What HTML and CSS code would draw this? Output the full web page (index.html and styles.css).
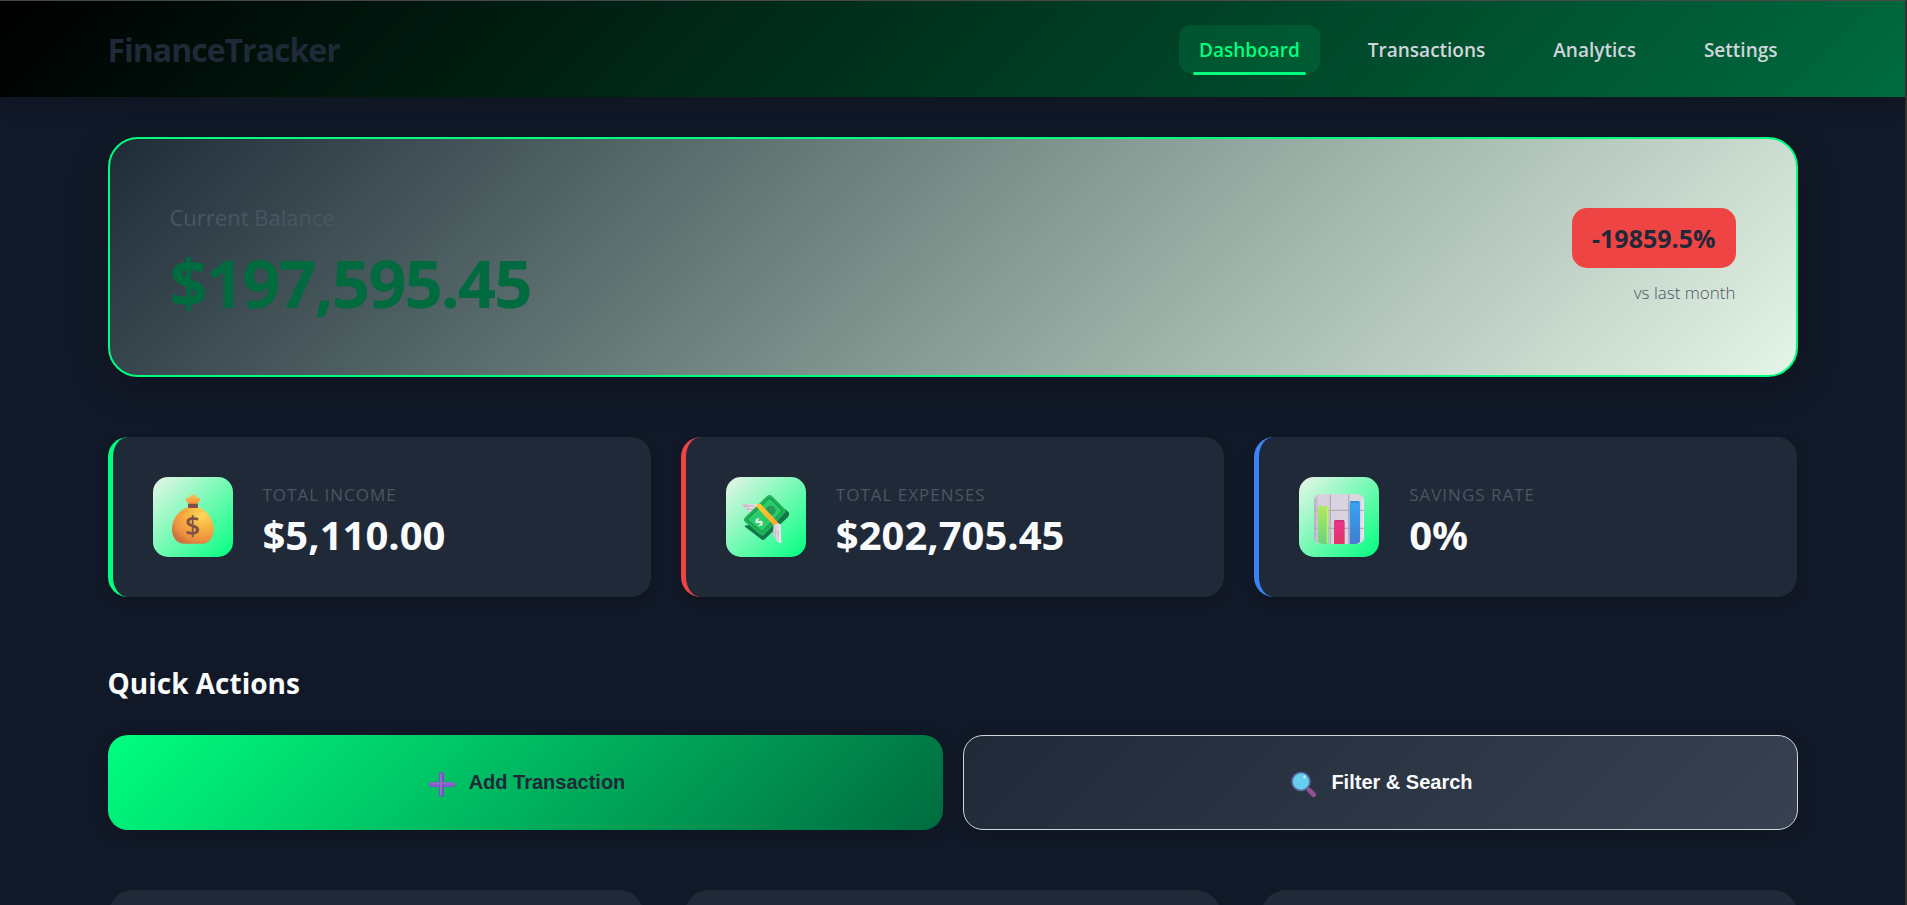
FILE: index.html
```html
<!DOCTYPE html>
<html lang="en">
<head>
<meta charset="utf-8">
<meta name="viewport" content="width=device-width, initial-scale=1">
<title>FinanceTracker</title>
<link rel="stylesheet" href="styles.css">
</head>
<body>
<header class="header">
  <div class="container header-inner">
    <div class="logo">FinanceTracker</div>
    <nav class="nav">
      <a class="nav-link active" href="#dashboard">Dashboard</a>
      <a class="nav-link" href="#transactions">Transactions</a>
      <a class="nav-link" href="#analytics">Analytics</a>
      <a class="nav-link" href="#settings">Settings</a>
    </nav>
  </div>
</header>
<main class="container main">
  <section class="balance">
    <div>
      <div class="balance-label">Current Balance</div>
      <div class="balance-amount">$197,595.45</div>
    </div>
    <div class="change">
      <span class="change-badge">-19859.5%</span>
      <span class="change-note">vs last month</span>
    </div>
  </section>

  <section class="stats">
    <article class="stat income">
      <div class="stat-icon">
        <svg width="50" height="50" viewBox="0 0 150 150" aria-hidden="true">
          <defs>
            <radialGradient id="bag" cx=".72" cy=".22" r=".85"><stop offset="0" stop-color="#ffd95c"/><stop offset=".45" stop-color="#f6b040"/><stop offset=".8" stop-color="#ee9140"/><stop offset="1" stop-color="#d2703f"/></radialGradient>
            <linearGradient id="neck" x1="0" y1="0" x2="0" y2="1"><stop offset="0" stop-color="#fdc04a"/><stop offset="1" stop-color="#f3903f"/></linearGradient>
          </defs>
          <path d="M63 32 L53 16 Q52 10 59 12 Q63 13 65 8 Q68 1 75 3 Q82 1 85 8 Q87 13 91 12 Q98 10 97 16 L87 32Z" fill="url(#neck)"/>
          <path d="M61 40 H89 C112 44 137 72 137 105 C137 132 122 149 101 149 H49 C27 149 12 132 12 105 C12 72 38 44 61 40Z" fill="url(#bag)"/>
          <rect x="60" y="29" width="30" height="13" rx="3" fill="#825045"/>
          <text x="74" y="125" class="bag-sign">$</text>
        </svg>
      </div>
      <div class="stat-text">
        <div class="stat-label">Total Income</div>
        <div class="stat-value">$5,110.00</div>
      </div>
    </article>
    <article class="stat expenses">
      <div class="stat-icon">
        <svg width="50" height="50" viewBox="0 0 150 150" aria-hidden="true">
          <defs>
            <linearGradient id="wing" x1="0" y1="0" x2="1" y2="0"><stop offset="0" stop-color="#c9c3cc"/><stop offset="1" stop-color="#efebf0"/></linearGradient>
            <linearGradient id="band" x1="0" y1="0" x2="1" y2="1"><stop offset="0" stop-color="#ffcf2e"/><stop offset="1" stop-color="#f8a52b"/></linearGradient>
          </defs>
          <path d="M2 30 H50 L46 58 L26 55 Q20 54 22 50 Q13 48 14 43 Q6 41 2 30Z" fill="url(#wing)"/>
          <path d="M9 36 H42 M17 46 H38" stroke="#aaa4ae" stroke-width="2"/>
          <path d="M10 92 L68 136 L142 65 Q146 60 142 54 L132 45 V55 L68 118Z" fill="#12754a"/>
          <path d="M10 97 L61 136 Q67 140 72 135 L141 69 Q146 62 142 54Z" fill="#12754a"/>
          <path d="M79 5 Q86 0 93 6 L132 46 Q137 52 131 58 L70 122 Q64 128 58 122 L12 84 Q6 78 11 71Z" fill="#20b259"/>
          <path d="M82 15 Q86 12 90 16 L121 47 Q124 51 120 55 L67 110 Q63 114 59 110 L22 80 Q18 77 22 73Z" fill="#28cc69" stroke="#168947" stroke-width="3"/>
          <ellipse cx="89" cy="49" rx="15" ry="14" fill="#25995a"/>
          <path d="M44 36 Q50 25 59 30 L116 91 L100 96Z" fill="url(#band)"/>
          <text x="54" y="96" class="note-sign" transform="rotate(-45 54 84)">$</text>
          <path d="M97 94 Q107 85 119 91 L121 148 Q112 148 109 141 Q102 139 103 130 Q93 129 96 116Z" fill="url(#wing)"/>
          <path d="M104 109 V129 M112 109 V139" stroke="#b9b3bd" stroke-width="2"/>
        </svg>
      </div>
      <div class="stat-text">
        <div class="stat-label">Total Expenses</div>
        <div class="stat-value">$202,705.45</div>
      </div>
    </article>
    <article class="stat savings">
      <div class="stat-icon">
        <svg width="50" height="50" viewBox="0 0 150 150" aria-hidden="true">
          <defs>
            <linearGradient id="lime" x1="0" y1="0" x2="0" y2="1"><stop offset="0" stop-color="#b4e960"/><stop offset="1" stop-color="#66d681"/></linearGradient>
            <linearGradient id="pink" x1="0" y1="0" x2="0" y2="1"><stop offset="0" stop-color="#ee338e"/><stop offset="1" stop-color="#dc3765"/></linearGradient>
            <linearGradient id="blue" x1="0" y1="0" x2="0" y2="1"><stop offset="0" stop-color="#35a6f5"/><stop offset="1" stop-color="#447bcf"/></linearGradient>
            <linearGradient id="board" x1="0" y1="0" x2="1" y2="0"><stop offset="0" stop-color="#b7adbf"/><stop offset=".1" stop-color="#d7d0de"/><stop offset=".93" stop-color="#dbd5e2"/><stop offset="1" stop-color="#eee9f2"/></linearGradient>
          </defs>
          <rect width="150" height="150" rx="20" fill="url(#board)"/>
          <path d="M0 49 H150 M0 103 H150 M49 2 V149 M104 2 V149" stroke="#b6adba" stroke-width="4"/>
          <path d="M12 42 Q12 36 18 36 H38 Q44 36 44 42 V150 H24 Q16 149 12 144Z" fill="url(#lime)"/>
          <path d="M60 84 Q60 78 66 78 H86 Q92 78 92 84 V150 H60Z" fill="url(#pink)"/>
          <path d="M107 27 Q107 21 113 21 H132 Q138 21 138 27 V144 Q132 150 124 150 H107Z" fill="url(#blue)"/>
          <path d="M40 41 V148" stroke="#d1f276" stroke-width="3"/>
          <path d="M62 81 H90" stroke="#bb3467" stroke-width="4"/>
          <path d="M109 24 H136" stroke="#2c80cb" stroke-width="4"/>
        </svg>
      </div>
      <div class="stat-text">
        <div class="stat-label">Savings Rate</div>
        <div class="stat-value">0%</div>
      </div>
    </article>
  </section>

  <section class="actions">
    <h2 class="section-title">Quick Actions</h2>
    <div class="action-row">
      <button class="action primary" type="button">
        <svg width="30" height="28" viewBox="-4 -2 30 28" aria-hidden="true">
          <rect x="0" y="11" width="26" height="5" rx="2" fill="#8653d3"/>
          <rect x="10" y="1" width="5" height="25" rx="2" fill="#7652bd"/>
          <path d="M2 12.500 H24 M12 3 V24" stroke="#8d70c4" stroke-width="2" stroke-linecap="round"/>
        </svg>
        Add Transaction
      </button>
      <button class="action secondary" type="button">
        <svg width="30" height="28" viewBox="-4 -2 30 28" aria-hidden="true">
          <path d="M16 17 L18 19" stroke="#7b6b93" stroke-width="3"/>
          <path d="M18.500 19.500 L22.500 23.500" stroke="#8e508f" stroke-width="5" stroke-linecap="round"/>
          <circle cx="10" cy="10.500" r="9" fill="#64d0ee" stroke="#5964a5" stroke-width="1.600"/>
          <ellipse cx="13.500" cy="6" rx="1.200" ry="1.800" fill="#c4effa"/>
        </svg>
        Filter &amp; Search
      </button>
    </div>
  </section>

  <section class="panels">
    <div class="panel"></div>
    <div class="panel"></div>
    <div class="panel"></div>
  </section>
</main>
</body>
</html>
```
FILE: styles.css
```css
* {
  box-sizing: border-box;
}

body {
  display: flex;
  flex-direction: column;
  margin: 0;
  height: 100vh;
  overflow: hidden;
  border-top: 1px solid #484848;
  border-right: 2px solid #303030;
  background: #111827;
  color: #f9fafb;
  font-family: "Segoe UI", "Open Sans", "Noto Sans", sans-serif;
}

.container {
  width: calc(100% - 64px);
  max-width: 1690px;
  margin: 0 auto;
}

.header {
  background: linear-gradient(135deg, #000000 0%, #006b3f 100%);
  box-shadow: 0 4px 20px rgba(0, 0, 0, 0.15);
}

.header-inner {
  display: flex;
  align-items: center;
  justify-content: space-between;
  min-height: 96px;
}

.logo {
  color: #1f2937;
  font-size: 32px;
  font-weight: 700;
  letter-spacing: -1px;
}

.nav {
  display: flex;
  gap: 28px;
}

.nav-link {
  position: relative;
  padding: 13px 20px 11px;
  border-radius: 12px;
  color: #d1d5db;
  font-size: 19px;
  font-weight: 600;
  line-height: 24px;
  text-decoration: none;
}

.nav-link.active {
  background: rgba(0, 255, 127, 0.1);
  color: #00ff7f;
}

.nav-link.active::after {
  content: "";
  position: absolute;
  bottom: -2px;
  left: 10%;
  width: 80%;
  height: 3px;
  border-radius: 2px;
  background: #00ff7f;
}

.main {
  display: flex;
  flex: 1;
  flex-direction: column;
  min-height: 0;
  padding-top: 40px;
}

.balance {
  display: flex;
  flex-shrink: 0;
  align-items: center;
  justify-content: space-between;
  min-height: 240px;
  padding: 40px 60px;
  border: 2px solid #00ff7f;
  border-radius: 30px;
  background: linear-gradient(135deg, #1f2c38 0%, #7f958e 50%, #e5f5e7 100%);
  box-shadow: 0 10px 40px rgba(0, 0, 0, 0.15);
}

.balance-label {
  color: #4b5563;
  font-size: 22px;
  font-weight: 500;
  line-height: 30px;
}

.balance-amount {
  margin-top: 20px;
  color: #006b3f;
  font-size: 67px;
  font-weight: 700;
  line-height: 60px;
  letter-spacing: -2px;
}

.change {
  display: flex;
  flex-direction: column;
  align-items: flex-end;
  gap: 13px;
  padding-bottom: 2px;
}

.change-badge {
  padding: 14px 20px;
  border-radius: 15px;
  background: #ef4444;
  color: #1f2937;
  font-size: 25px;
  font-weight: 700;
  line-height: 32px;
}

.change-note {
  color: #4b5563;
  font-size: 17px;
  font-weight: 300;
  line-height: 24px;
}

.stats {
  display: grid;
  flex-shrink: 0;
  grid-template-columns: repeat(3, 1fr);
  gap: 30px;
  margin-top: 60px;
}

.stat {
  display: flex;
  align-items: center;
  gap: 30px;
  min-height: 160px;
  padding: 0 40px;
  border-left: 5px solid;
  border-radius: 20px;
  background: #1f2937;
  box-shadow: 0 4px 10px rgba(0, 0, 0, 0.15);
}

.income {
  border-color: #00ff7f;
}

.expenses {
  border-color: #ef4444;
}

.savings {
  border-color: #3b82f6;
}

.stat-icon {
  display: flex;
  align-items: center;
  justify-content: center;
  width: 80px;
  height: 80px;
  padding-top: 4px;
  border-radius: 15px;
  background: linear-gradient(135deg, #e8f5e8 0%, #00ff7f 100%);
}

.bag-sign {
  fill: #825045;
  font-size: 80px;
  font-weight: 600;
  text-anchor: middle;
}

.note-sign {
  fill: #e8f5e8;
  font-size: 34px;
  font-weight: 700;
  text-anchor: middle;
}

.stat-text {
  padding-top: 8px;
}

.stat-label {
  color: #4b5563;
  font-size: 17px;
  font-weight: 500;
  line-height: 24px;
  letter-spacing: 1px;
  text-transform: uppercase;
}

.stat-value {
  margin-top: 4px;
  color: #f9fafb;
  font-size: 40px;
  font-weight: 700;
  line-height: 48px;
}

.actions {
  flex-shrink: 0;
}

.section-title {
  margin: 64px 0 30px;
  font-size: 28px;
  font-weight: 700;
  line-height: 44px;
}

.action-row {
  display: grid;
  grid-template-columns: repeat(2, 1fr);
  gap: 20px;
}

.action {
  display: flex;
  align-items: center;
  justify-content: center;
  gap: 14px;
  min-height: 95px;
  border: 0;
  border-radius: 20px;
  box-shadow: 0 4px 15px rgba(0, 0, 0, 0.15);
  font-family: "Liberation Sans", Arial, sans-serif;
  font-size: 20px;
  font-weight: 700;
  cursor: pointer;
}

.primary {
  background: linear-gradient(135deg, #00ff7f 0%, #006b3f 100%);
  color: #1f2937;
}

.secondary {
  border: 1px solid #d1d5db;
  background: linear-gradient(135deg, #1f2937 0%, #374151 100%);
  color: #f9fafb;
}

.panels {
  display: grid;
  flex: 1;
  grid-template-columns: repeat(3, 1fr);
  gap: 40px;
  min-height: 0;
  margin-top: 60px;
  overflow: hidden;
}

.panel {
  min-height: 100px;
  border-radius: 25px;
  background: #1f2937;
}
```
